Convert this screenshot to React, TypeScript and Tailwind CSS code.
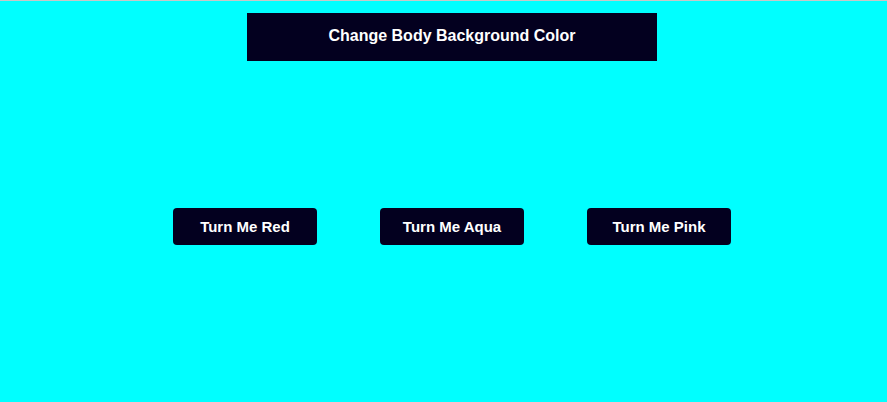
import React, { useState } from 'react';

const colors: { label: string; value: string }[] = [
  { label: 'Turn Me Red', value: '#ff0000' },
  { label: 'Turn Me Aqua', value: '#00ffff' },
  { label: 'Turn Me Pink', value: '#ffc0cb' },
];

const App: React.FC = () => {
  const [bg, setBg] = useState('#00ffff');

  return (
    <div
      className="w-full h-[402px] border-t border-[#c8c8c8] pl-[17px] font-['Liberation_Sans',Arial,sans-serif]"
      style={{ backgroundColor: bg }}
    >
      <div className="flex flex-col items-center">
        <h1 className="mt-[12px] w-[410px] h-[48px] pb-[3px] flex items-center justify-center bg-[#03001f] text-white text-[16px] font-bold">
          Change Body Background Color
        </h1>
        <div className="mt-[147px] flex gap-[63px]">
          {colors.map((c) => (
            <button
              key={c.label}
              onClick={() => setBg(c.value)}
              className="w-[144px] h-[37px] pt-[1px] rounded-[4px] bg-[#03001f] text-white text-[15px] font-bold cursor-pointer"
            >
              {c.label}
            </button>
          ))}
        </div>
      </div>
    </div>
  );
};

export default App;
